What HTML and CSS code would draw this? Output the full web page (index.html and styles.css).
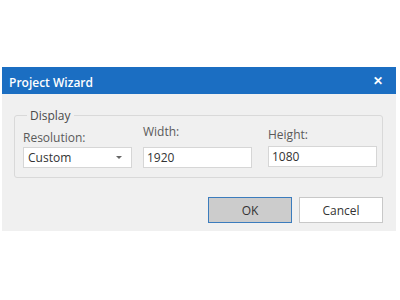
FILE: index.html
```html
<!DOCTYPE html>
<html lang="en">
<head>
  <meta charset="UTF-8" />
  <title>Project Wizard</title>
  <link rel="stylesheet" href="styles.css">
</head>
<body>
  <div class="dialog">
    <div class="titlebar">
      <span class="title">Project Wizard</span>
      <span class="close">&#x2715;</span>
    </div>
    <div class="content">
      <fieldset class="group">
        <legend>Display</legend>
        <div class="fields">
          <div class="field res">
            <label>Resolution:</label>
            <div class="combo">
              <span>Custom</span>
              <svg width="6" height="3" viewBox="0 0 6 3"><path d="M0 0h6L3 3z" fill="#666"/></svg>
            </div>
          </div>
          <div class="field wid">
            <label>Width:</label>
            <input type="text" value="1920" />
          </div>
          <div class="field hei">
            <label>Height:</label>
            <input type="text" value="1080" />
          </div>
        </div>
      </fieldset>
      <div class="buttons">
        <button class="ok">OK</button>
        <button>Cancel</button>
      </div>
    </div>
  </div>
</body>
</html>
```

FILE: styles.css
```css
body {
  margin: 0;
  background: white;
  font-family: "Open Sans", "Noto Sans", sans-serif;
  font-size: 12px;
  color: #444;
}

.dialog {
  width: 394px;
  margin: 67px 0 0 2px;
  background-color: #f0f0f0;
}

.titlebar {
  height: 27px;
  background-color: #1b6ec2;
  color: white;
  display: flex;
  align-items: center;
  justify-content: space-between;
  padding: 0 13px 0 7px;
}

.title {
  font-size: 12px;
  font-weight: 600;
  margin-top: 3px;
}

.close {
  font-size: 12px;
  font-weight: bold;
}

.content {
  padding: 13px 12px 8px 12px;
}

.group {
  margin: 0 1px 0 0;
  padding: 1px 5px 9px 8px;
  border: 1px solid #d9d9d9;
  border-radius: 3px;
}

.group legend {
  padding: 0 3px;
  margin-left: 4px;
  color: #4a4a4a;
}

.fields {
  display: flex;
}

.field {
  display: flex;
  flex-direction: column;
  width: 109px;
}

.field label {
  color: #5a5a5a;
  height: 18px;
}

.res label { margin-top: 4px; }
.wid { margin-left: 11px; }
.wid label { margin-top: -2px; margin-bottom: 6px; }
.hei { margin-left: 16px; }
.hei label { margin-top: 1px; margin-bottom: 2px; }

.combo, .field input {
  height: 21px;
  box-sizing: border-box;
  border: 1px solid #d6d6d6;
  background: white;
  font-family: inherit;
  font-size: 12px;
  color: #333;
}

.combo {
  display: flex;
  align-items: center;
  justify-content: space-between;
  padding: 0 9px 0 4px;
}

.field input {
  padding: 0 3px;
  outline: none;
  width: 109px;
}

.buttons {
  display: flex;
  justify-content: flex-end;
  gap: 7px;
  margin-top: 19px;
  padding-right: 1px;
}

.buttons button {
  width: 84px;
  height: 26px;
  border: 1px solid #c8c8c8;
  background: white;
  font-family: inherit;
  font-size: 12px;
  color: #333;
}

.buttons .ok {
  background-color: #cccccc;
  border-color: #3b7cbd;
}
```
